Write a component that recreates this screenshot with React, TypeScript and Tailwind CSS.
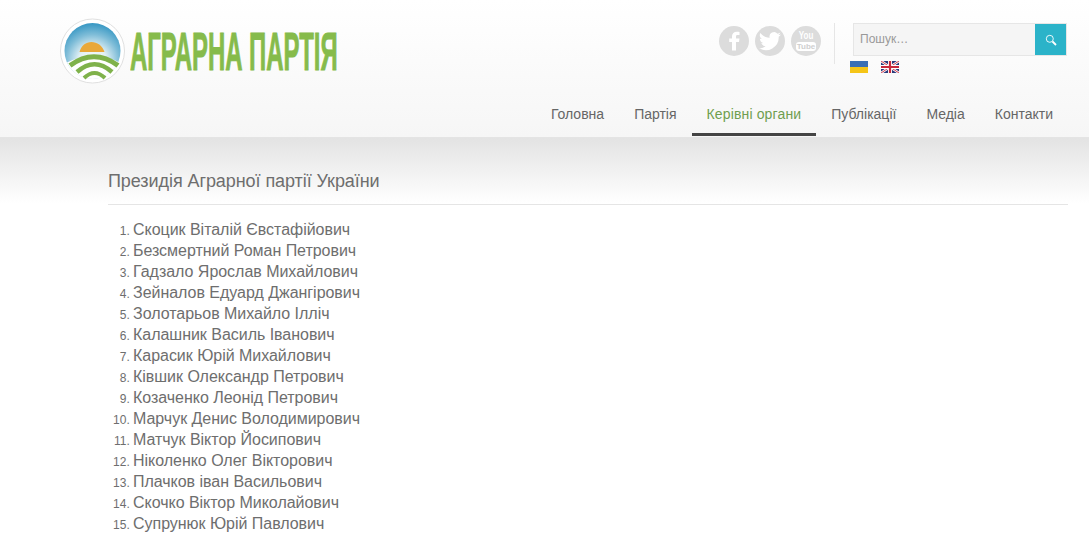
import React from "react";

const names = [
  "Скоцик Віталій Євстафійович",
  "Безсмертний Роман Петрович",
  "Гадзало Ярослав Михайлович",
  "Зейналов Едуард Джангірович",
  "Золотарьов Михайло Ілліч",
  "Калашник Василь Іванович",
  "Карасик Юрій Михайлович",
  "Ківшик Олександр Петрович",
  "Козаченко Леонід Петрович",
  "Марчук Денис Володимирович",
  "Матчук Віктор Йосипович",
  "Ніколенко Олег Вікторович",
  "Плачков іван Васильович",
  "Скочко Віктор Миколайович",
  "Супрунюк Юрій Павлович",
];

const nav = ["Головна", "Партія", "Керівні органи", "Публікації", "Медіа", "Контакти"];

function LogoMark() {
  return (
    <svg width="65" height="66" viewBox="0 0 65 66" className="block">
      <defs>
        <radialGradient id="sky" cx="50%" cy="68%" r="66%">
          <stop offset="0%" stopColor="#ffffff" />
          <stop offset="38%" stopColor="#e2f0f5" />
          <stop offset="72%" stopColor="#7fbdd8" />
          <stop offset="100%" stopColor="#3c9ac5" />
        </radialGradient>
        <clipPath id="disc">
          <circle cx="32.500" cy="33" r="28" />
        </clipPath>
      </defs>
      <circle cx="32.500" cy="33" r="32" fill="#fff" stroke="#e0e0e0" strokeWidth="1" />
      <circle cx="32.500" cy="33" r="28" fill="url(#sky)" />
      <g clipPath="url(#disc)">
        <path d="M0 48 Q34 28 66 48 V66 H0 Z" fill="#fff" />
      </g>
      <path d="M19.500 34 C21 27.500 26 24 31.500 24 C37 24 42.500 27.500 44.500 34 Z" fill="#e9a83a" />
      <path d="M10 47.500 Q34 30 58 47.500" fill="none" stroke="#7fb24b" strokeWidth="5" />
      <path d="M17 54 Q34.500 38.500 52 54" fill="none" stroke="#7fb24b" strokeWidth="4.500" />
      <path d="M24 60 Q34.500 50 45 60" fill="none" stroke="#7fb24b" strokeWidth="4" />
    </svg>
  );
}

function Social({ children }: { children: React.ReactNode }) {
  return (
    <div className="flex h-[30px] w-[30px] items-center justify-center overflow-hidden rounded-full bg-[#dcdcdc]">
      {children}
    </div>
  );
}

function UaFlag() {
  return (
    <div className="flex h-[12px] w-[18px] flex-col">
      <div className="h-[6px] bg-[#3a6fb5]" />
      <div className="h-[6px] bg-[#f5c518]" />
    </div>
  );
}

function GbFlag() {
  return (
    <svg width="18" height="12" viewBox="0 0 18 12" className="block">
      <rect width="18" height="12" fill="#2a3a7c" />
      <path d="M0 0 L18 12 M18 0 L0 12" stroke="#fff" strokeWidth="2.4" />
      <path d="M0 0 L18 12 M18 0 L0 12" stroke="#c8283c" strokeWidth="0.9" />
      <path d="M9 0 V12 M0 6 H18" stroke="#fff" strokeWidth="4" />
      <path d="M9 0 V12 M0 6 H18" stroke="#c8283c" strokeWidth="2.2" />
    </svg>
  );
}

export default function App() {
  return (
    <div className="min-h-[553px] bg-white font-['Liberation_Sans',Arial,sans-serif]">
      <header className="h-[138px] border-b border-[#e4e4e4] bg-gradient-to-b from-white to-[#f6f6f6]">
        <div className="flex h-[92px] justify-between pl-[60px] pr-[22px]">
          <div className="flex items-start pt-[18px]">
            <LogoMark />
            <div className="ml-[5px] mt-[5px] h-[56px] w-[207px]">
              <div className="w-max origin-top-left scale-x-[0.443] whitespace-nowrap text-[54px] font-bold leading-[56px] text-[#86bb4b] [-webkit-text-stroke:1px_#86bb4b]">
                АГРАРНА ПАРТІЯ
              </div>
            </div>
          </div>
          <div className="flex items-start pt-[23px]">
            <div className="mt-[3px] flex gap-[6px]">
              <Social>
                <svg width="30" height="30" viewBox="0 0 30 30">
                  <path d="M17 24.500 V16 H20 L20.500 12.600 H17 V10.600 C17 9.600 17.300 9 18.600 9 H20.500 V5.900 C20 5.800 19 5.700 17.800 5.700 C15 5.700 13 7.400 13 10.300 V12.600 H10.200 V16 H13 V24.500 Z" fill="#fff" />
                </svg>
              </Social>
              <Social>
                <svg width="30" height="30" viewBox="0 0 24 24">
                  <g transform="translate(2.400 2.800) scale(0.8)">
                    <path d="M23 4.900c-.8.400-1.700.600-2.600.700.900-.600 1.600-1.400 2-2.500-.900.500-1.800.900-2.900 1.100A4.500 4.500 0 0 0 11.700 8.300C7.900 8.100 4.600 6.300 2.400 3.600c-1.200 2-.6 4.700 1.400 6-.7 0-1.400-.2-2-.6 0 2.100 1.500 4.100 3.600 4.500-.7.200-1.400.200-2 .100.6 1.800 2.200 3.100 4.200 3.100A9 9 0 0 1 1 18.600 12.800 12.800 0 0 0 20.700 7.200c.9-.6 1.700-1.400 2.300-2.300z" fill="#fff" />
                  </g>
                </svg>
              </Social>
              <Social>
                <div className="flex flex-col items-center font-bold leading-none text-white">
                  <span className="scale-x-[0.8] text-[10px] leading-[10px]">You</span>
                  <span className="mt-[1px] flex h-[9px] w-[20px] items-center justify-center rounded-[3px] bg-white text-[8px] leading-[9px] text-[#cfcfcf]">
                    Tube
                  </span>
                </div>
              </Social>
            </div>
            <div className="ml-[13px] h-[41px] w-px bg-[#e6e6e6]" />
            <div className="ml-[18px]">
              <div className="flex h-[33px] w-[214px] border border-[#e6e6e6] bg-[#f5f5f5]">
                <div className="flex-1 pl-[6px] text-[12px] leading-[31px] text-[#999]">Пошук…</div>
                <div className="flex w-[31px] items-center justify-center bg-[#2bb3c9]">
                  <svg width="12" height="12" viewBox="0 0 12 12" fill="none" stroke="#fff">
                    <circle cx="4.800" cy="4.800" r="3.500" strokeWidth="0.9" />
                    <path d="M7.500 7.500 L11 11" strokeWidth="1.800" />
                  </svg>
                </div>
              </div>
              <div className="ml-[-3px] mt-[5px] flex gap-[13px]">
                <UaFlag />
                <GbFlag />
              </div>
            </div>
          </div>
        </div>
        <nav className="flex h-[45px] justify-end pr-[21px] text-[14px] text-[#666]">
          {nav.map((n, i) => (
            <div
              key={n}
              className={
                i === 2
                  ? "h-[44px] border-b-[3px] border-[#444] px-[15px] pt-[12px] leading-[20px] tracking-[0.14px] text-[#6f9e4f]"
                  : "h-[44px] px-[15px] pt-[12px] leading-[20px]"
              }
            >
              {n}
            </div>
          ))}
        </nav>
      </header>
      <main className="h-[415px] bg-gradient-to-b from-[#e3e3e3] to-white to-[65px] pl-[108px] pr-[21px]">
        <h1 className="border-b border-[#e5e5e5] pb-[12px] pt-[32px] text-[18px] font-normal leading-[22px] tracking-[-0.07px] text-[#6e6e6e]">
          Президія Аграрної партії України
        </h1>
        <ol className="mt-[14px] list-decimal pl-[25px] text-[16px] leading-[21px] tracking-[-0.03px] text-[#6e6e6e] marker:text-[12px]">
          {names.map((n) => (
            <li key={n}>{n}</li>
          ))}
        </ol>
      </main>
    </div>
  );
}
